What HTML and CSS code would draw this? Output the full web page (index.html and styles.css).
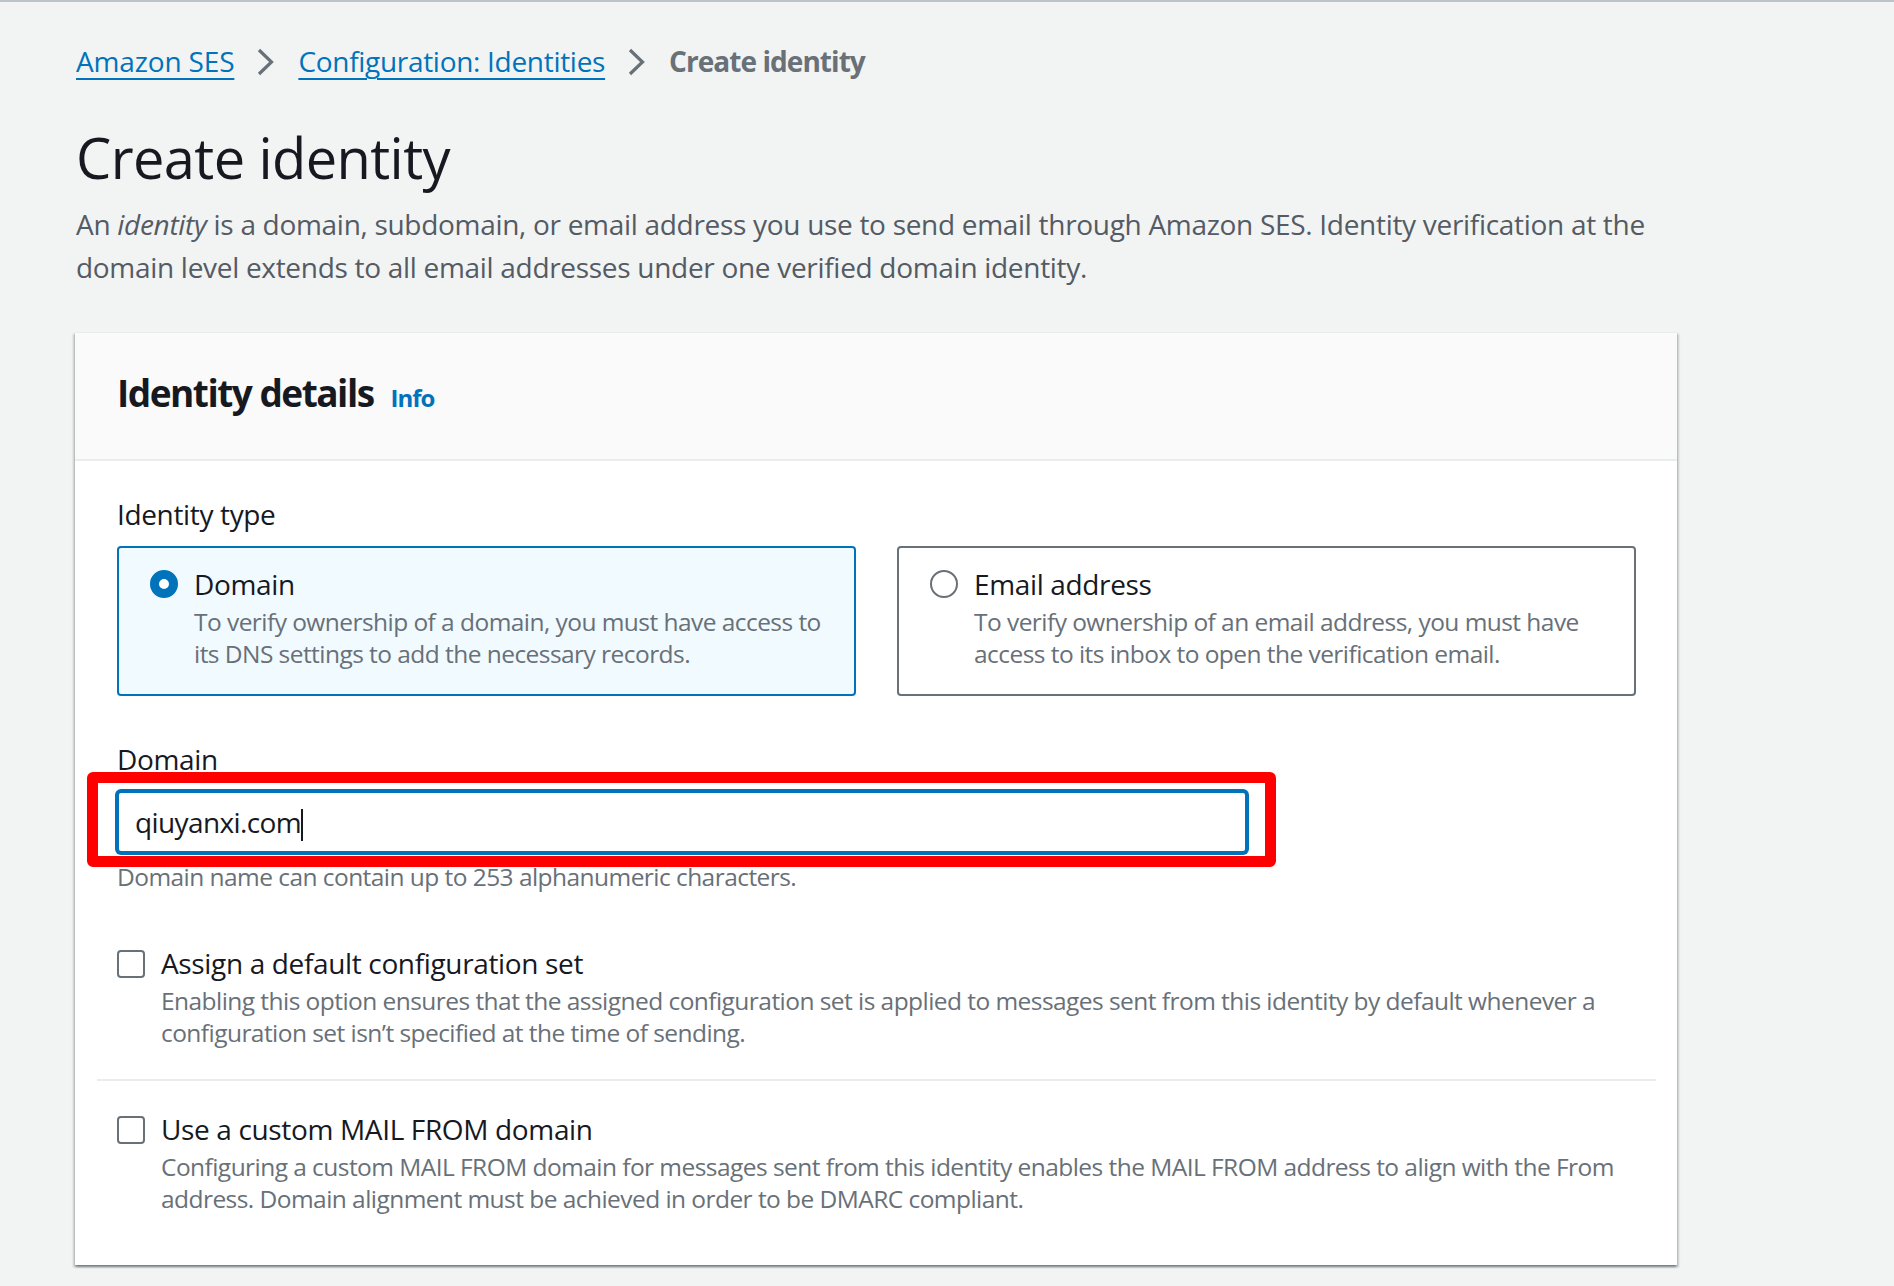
FILE: index.html
```html
<!DOCTYPE html>
<html lang="en">
<head>
<meta charset="utf-8">
<title>Create identity</title>
<link rel="stylesheet" href="styles.css">
</head>
<body>
<main class="page">
  <nav class="breadcrumbs">
    <a class="crumb-link" href="#">Amazon SES</a>
    <svg class="chevron" width="17" height="28" viewBox="0 0 17 28"><polyline points="2,2 14.5,14 2,26" fill="none" stroke="#687078" stroke-width="3.2"/></svg>
    <a class="crumb-link crumb-link-long" href="#">Configuration: Identities</a>
    <svg class="chevron" width="17" height="28" viewBox="0 0 17 28"><polyline points="2,2 14.5,14 2,26" fill="none" stroke="#687078" stroke-width="3.2"/></svg>
    <span class="crumb-current">Create identity</span>
  </nav>

  <h1 class="page-title">Create identity</h1>
  <p class="page-desc"><span>An</span> <em>identity</em> <span>is a domain, subdomain, or email address you use to send email through Amazon SES. Identity verification at the</span> <span>domain level extends to all email addresses under one verified domain identity.</span></p>

  <section class="card">
    <header class="card-header">
      <h2 class="card-title">Identity details</h2>
      <a class="info-link" href="#">Info</a>
    </header>
    <div class="card-body">
      <div class="field-label">Identity type</div>
      <div class="tiles">
        <div class="tile tile-selected">
          <span class="radio radio-checked"></span>
          <div class="tile-text">
            <div class="tile-label">Domain</div>
            <div class="small-text">To verify ownership of a domain, you must have access to its DNS settings to add the necessary records.</div>
          </div>
        </div>
        <div class="tile">
          <span class="radio"></span>
          <div class="tile-text">
            <div class="tile-label">Email address</div>
            <div class="small-text">To verify ownership of an email address, you must have access to its inbox to open the verification email.</div>
          </div>
        </div>
      </div>

      <div class="field-label field-label-domain">Domain</div>
      <div class="input-wrap">
        <div class="text-input"><span class="input-value">qiuyanxi.com</span><span class="caret"></span></div>
        <div class="highlight-box"></div>
      </div>
      <div class="small-text constraint">Domain name can contain up to 253 alphanumeric characters.</div>

      <div class="check-row check-first">
        <span class="checkbox"></span>
        <div>
          <div class="check-label">Assign a default configuration set</div>
          <div class="small-text">Enabling this option ensures that the assigned configuration set is applied to messages sent from this identity by default whenever a configuration set isn’t specified at the time of sending.</div>
        </div>
      </div>
      <hr class="divider">
      <div class="check-row check-second">
        <span class="checkbox"></span>
        <div>
          <div class="check-label">Use a custom MAIL FROM domain</div>
          <div class="small-text">Configuring a custom MAIL FROM domain for messages sent from this identity enables the MAIL FROM address to align with the From address. Domain alignment must be achieved in order to be DMARC compliant.</div>
        </div>
      </div>
    </div>
  </section>
</main>
</body>
</html>
```
FILE: styles.css
```css
* { box-sizing: border-box; }

html, body {
  margin: 0;
  padding: 0;
}

body {
  background: #f2f3f3;
  border-top: 2px solid #bcc3ca;
  font-family: "Open Sans", "Noto Sans", sans-serif;
  color: #16191f;
  min-height: 1286px;
}

.page {
  padding: 38px 0 0 76px;
}

/* Breadcrumbs */
.breadcrumbs {
  display: flex;
  align-items: center;
  height: 43px;
  font-size: 28px;
  line-height: 43px;
}

.crumb-link {
  color: #0073bb;
  text-decoration: underline;
  text-decoration-thickness: 2px;
  text-underline-offset: 6px;
  letter-spacing: -0.15px;
}

.crumb-link-long {
  letter-spacing: -0.3px;
}

.chevron {
  display: block;
  margin: 0 24px 0 23px;
}

.crumb-current {
  color: #687078;
  font-weight: 700;
  letter-spacing: -0.95px;
}

/* Title */
.page-title {
  margin: 36px 0 0;
  font-size: 56px;
  line-height: 76px;
  font-weight: 400;
  letter-spacing: -0.6px;
  color: #16191f;
}

.page-desc {
  margin: 8px 0 0;
  max-width: 1590px;
  font-size: 28px;
  line-height: 43px;
  color: #545b64;
  letter-spacing: -0.3px;
}

.page-desc em {
  letter-spacing: -0.3px;
}

/* Card */
.card {
  margin-top: 43px;
  width: 1602px;
  margin-left: -1px;
  background: #fff;
  border-top: 1px solid #eaeded;
  box-shadow: 0 2px 2px 0 rgba(0, 28, 36, 0.35),
              2px 2px 2px 0 rgba(0, 28, 36, 0.15),
              -2px 2px 2px 0 rgba(0, 28, 36, 0.15);
}

.card-header {
  display: flex;
  align-items: baseline;
  gap: 17px;
  background: #fafafa;
  padding: 37px 41px 43px 42px;
  border-bottom: 2px solid #eaeded;
}

.card-title {
  margin: 0;
  font-size: 37px;
  line-height: 46px;
  font-weight: 700;
  letter-spacing: -1.5px;
  color: #16191f;
}

.info-link {
  font-size: 24px;
  font-weight: 700;
  color: #0073bb;
  text-decoration: none;
  letter-spacing: -1px;
}

.card-body {
  padding: 32px 41px 50px 42px;
}

.field-label {
  font-size: 28px;
  line-height: 43px;
  letter-spacing: -0.35px;
  color: #16191f;
}

/* Tiles */
.tiles {
  margin-top: 10px;
  display: grid;
  grid-template-columns: 1fr 1fr;
  gap: 41px;
}

.tile {
  display: grid;
  grid-template-columns: 28px 1fr;
  column-gap: 16px;
  height: 150px;
  padding: 16px 24px 0 31px;
  border: 2px solid #687078;
  border-radius: 4px;
  background: #fff;
}

.tile-selected {
  border-color: #0073bb;
  background: #f1faff;
}

.radio {
  display: block;
  width: 28px;
  height: 28px;
  margin-top: 6px;
  border-radius: 50%;
  border: 2px solid #687078;
  background: #fff;
}

.radio-checked {
  border: 9px solid #0073bb;
}

.tile-label {
  font-size: 28px;
  line-height: 40px;
  letter-spacing: -0.35px;
  color: #16191f;
}

.small-text {
  font-size: 24.5px;
  line-height: 32px;
  letter-spacing: -0.55px;
  color: #687078;
}

.tile-label + .small-text {
  margin-top: 2px;
}

/* Domain input */
.field-label-domain {
  margin-top: 42px;
}

.input-wrap {
  position: relative;
  margin-top: 10px;
  width: 1130px;
}

.text-input {
  height: 62px;
  border: 2px solid #0073bb;
  border-radius: 4px;
  box-shadow: 0 0 0 2px #0073bb;
  background: #fff;
  padding: 0 16px;
  font-size: 28px;
  line-height: 58px;
  letter-spacing: -0.6px;
  color: #16191f;
  display: flex;
  align-items: center;
}

.caret {
  display: inline-block;
  width: 2px;
  height: 32px;
  margin-top: 6px;
  background: #16191f;
}

.highlight-box {
  position: absolute;
  left: -30px;
  top: -19px;
  right: -29px;
  bottom: -14px;
  border: 11px solid #ff0000;
  border-radius: 6px;
  pointer-events: none;
}

.constraint {
  margin-top: 8px;
}

/* Checkboxes */
.check-row {
  display: grid;
  grid-template-columns: 28px 1fr;
  column-gap: 16px;
}

.check-first {
  margin-top: 50px;
}

.check-second {
  margin-top: 28px;
}

.checkbox {
  display: block;
  width: 28px;
  height: 28px;
  margin-top: 7px;
  border: 2px solid #687078;
  border-radius: 4px;
  background: #fff;
}

.check-label {
  font-size: 28px;
  line-height: 40px;
  letter-spacing: -0.35px;
  color: #16191f;
}

.check-label + .small-text {
  margin-top: 2px;
}

.divider {
  margin: 30px -20px 0;
  border: 0;
  border-top: 2px solid #eaeded;
  height: 0;
}
```
